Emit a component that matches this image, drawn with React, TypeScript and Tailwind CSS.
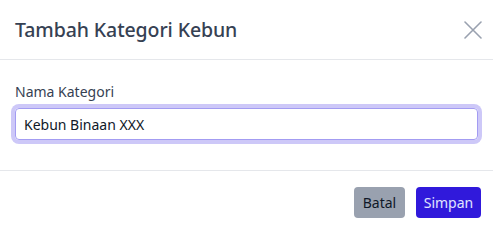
export default function App() {
  return (
    <div className="h-[234px] w-[493px] bg-white font-['Noto_Sans',sans-serif] text-gray-700">
      <div className="flex h-[60px] items-center justify-between border-b border-gray-200 pl-[15px] pr-[11px]">
        <h2 className="text-[19.5px] font-medium leading-none tracking-[-0.1px]">Tambah Kategori Kebun</h2>
        <button className="flex h-[18px] w-[18px] items-center justify-center text-gray-400">
          <svg width="18" height="18" viewBox="0 0 18 18" fill="none" stroke="currentColor" strokeWidth="1.6" strokeLinecap="round">
            <path d="M1 1 17 17M17 1 1 17" />
          </svg>
        </button>
      </div>
      <div className="h-[111px] border-b border-gray-200 px-[15px] pt-[23px]">
        <label className="block text-[14px] leading-[18px]">Nama Kategori</label>
        <input
          defaultValue="Kebun Binaan XXX"
          className="mt-[7px] h-[32px] w-full rounded-[4px] border border-[#a39cf2] px-[8px] text-[14px] text-gray-900 outline-none ring-4 ring-[#cdc8f8]"
        />
      </div>
      <div className="flex justify-end gap-[11px] px-[12px] pt-[16px]">
        <button className="h-[31px] w-[51px] rounded-[4px] bg-gray-400 text-[14px] text-gray-900">Batal</button>
        <button className="h-[31px] w-[65px] rounded-[4px] bg-[#3019db] text-[14px] text-indigo-100">Simpan</button>
      </div>
    </div>
  )
}
